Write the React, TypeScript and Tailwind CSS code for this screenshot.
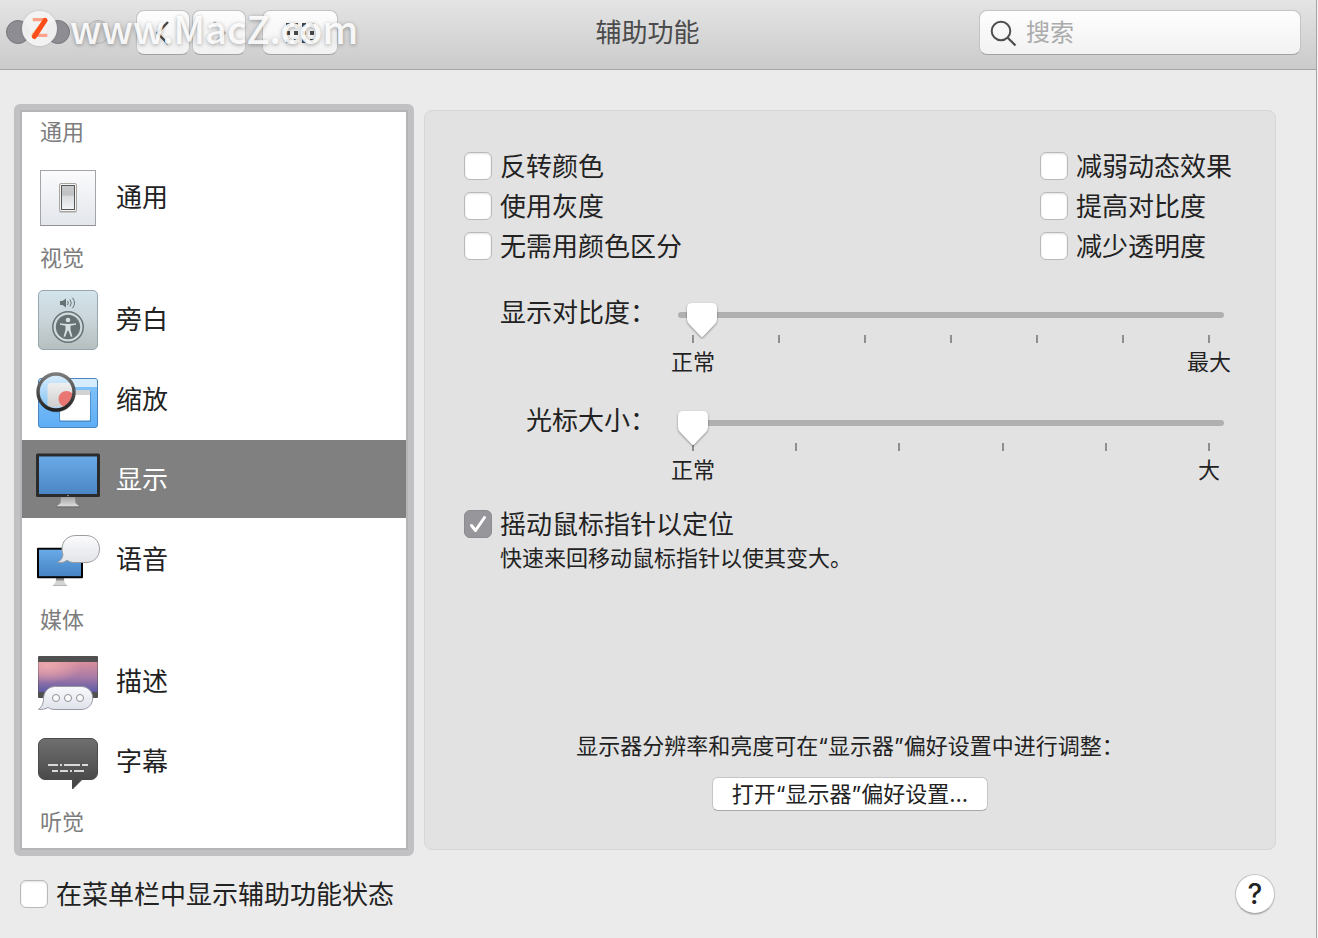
import React from "react";

function GeneralIcon() {
  return (
    <svg viewBox="0 0 64 64" className="size-16 shrink-0" aria-hidden="true">
      <defs>
        <linearGradient id="plate" x1="0" y1="0" x2="0" y2="1">
          <stop offset="0" stopColor="#fbfbfd" />
          <stop offset="1" stopColor="#e3e6eb" />
        </linearGradient>
        <linearGradient id="rocker" x1="0" y1="0" x2="0" y2="1">
          <stop offset="0" stopColor="#c9caca" />
          <stop offset="0.4" stopColor="#bfc1c3" />
          <stop offset="0.45" stopColor="#d9dbdd" />
          <stop offset="1" stopColor="#f2f4f5" />
        </linearGradient>
      </defs>
      <rect x="4.5" y="5.5" width="55" height="55" fill="url(#plate)" stroke="#a3a5a9" />
      <path d="M4 60.5h56" stroke="#8f9195" />
      <rect x="23" y="19" width="18" height="29" rx="2" fill="#000" opacity="0.15" />
      <rect x="23.5" y="18.5" width="17" height="28" rx="1.5" fill="#f5f4f2" stroke="#a8a49e" />
      <rect x="25.5" y="20.5" width="13" height="24" fill="url(#rocker)" stroke="#55585b" />
    </svg>
  );
}

function VoiceOverIcon() {
  return (
    <svg viewBox="0 0 64 64" className="size-16 shrink-0" aria-hidden="true">
      <defs>
        <linearGradient id="voBg" x1="0" y1="0" x2="0" y2="1">
          <stop offset="0" stopColor="#d3e4ec" />
          <stop offset="0.5" stopColor="#c9d5d9" />
          <stop offset="1" stopColor="#b6bebf" />
        </linearGradient>
      </defs>
      <rect x="2.5" y="3.5" width="59" height="59" rx="4.5" fill="url(#voBg)" stroke="#98a7ad" />
      <path d="M24 14h2.500l3.500-2.500v9l-3.500-2.500h-2.500z" fill="#667174" />
      <path
        d="M31.500 14q1.500 2 0 4M34 12.500q2.500 3.500 0 7M36.500 10.800q4 5.200 0 10.400"
        fill="none"
        stroke="#667174"
      />
      <circle cx="32" cy="40" r="15.200" fill="#cfdadd" stroke="#667174" strokeWidth="1.500" />
      <circle cx="32" cy="40" r="12.200" fill="#667174" />
      <circle cx="32" cy="33" r="2.300" fill="#d5dfe1" />
      <path
        d="M24 36.200q8 1.600 16 0v1.500l-5.500 1v4l2 7h-1.700l-2.300-6h-1l-2.300 6h-1.700l2-7v-4l-5.500-1z"
        fill="#d5dfe1"
      />
    </svg>
  );
}

function ZoomIcon() {
  return (
    <svg viewBox="0 0 64 64" className="size-16 shrink-0" aria-hidden="true">
      <defs>
        <linearGradient id="zoomWin" x1="0" y1="0" x2="0" y2="1">
          <stop offset="0" stopColor="#86c4f8" />
          <stop offset="1" stopColor="#5eaef6" />
        </linearGradient>
        <linearGradient id="zoomLens" x1="0" y1="0" x2="0" y2="1">
          <stop offset="0" stopColor="#d9edfc" />
          <stop offset="1" stopColor="#7fc0f4" />
        </linearGradient>
        <linearGradient id="zoomRim" x1="0" y1="0" x2="0" y2="1">
          <stop offset="0" stopColor="#7b7b7b" />
          <stop offset="1" stopColor="#222" />
        </linearGradient>
        <linearGradient id="zoomGrey" x1="0" y1="0" x2="0" y2="1">
          <stop offset="0" stopColor="#efefef" />
          <stop offset="1" stopColor="#cfcfcf" />
        </linearGradient>
        <clipPath id="zoomClip">
          <circle cx="20" cy="25" r="17" />
        </clipPath>
      </defs>
      <rect x="2.500" y="11.500" width="59" height="49" rx="2.500" fill="url(#zoomWin)" stroke="#4a86bd" />
      <path d="M3 20v-6a2 2 0 0 1 2-2h54a2 2 0 0 1 2 2v6z" fill="#d6ecfd" />
      <rect x="23" y="24" width="32" height="31" rx="1.500" fill="#2e6ca4" opacity="0.500" />
      <rect x="24" y="23" width="30" height="30.500" rx="1" fill="#fff" />
      <path d="M24 23h30v5h-30z" fill="#d3d3d5" />
      <circle cx="20.500" cy="26.500" r="19" fill="#000" opacity="0.200" />
      <circle cx="20" cy="25" r="17" fill="url(#zoomLens)" />
      <g clipPath="url(#zoomClip)">
        <rect x="11.500" y="16" width="32" height="24" rx="4" fill="url(#zoomGrey)" />
        <circle cx="30.500" cy="32" r="8" fill="#e87673" />
        <path d="M11.500 40h26v6h-26z" fill="#a9d3f6" />
      </g>
      <circle cx="20" cy="25" r="18" fill="none" stroke="url(#zoomRim)" strokeWidth="3.400" />
    </svg>
  );
}

function DisplayIcon() {
  return (
    <svg viewBox="0 0 64 64" className="size-16 shrink-0" aria-hidden="true">
      <defs>
        <linearGradient id="screen" x1="0" y1="0" x2="0" y2="1">
          <stop offset="0" stopColor="#6aaae8" />
          <stop offset="1" stopColor="#4a86c3" />
        </linearGradient>
        <linearGradient id="stand" x1="0" y1="0" x2="0" y2="1">
          <stop offset="0" stopColor="#a2a2a2" />
          <stop offset="1" stopColor="#dedede" />
        </linearGradient>
      </defs>
      <path d="M25 50h14l0.500 6 4 3.500h-23l4-3.500z" fill="url(#stand)" />
      <path d="M20 59.500h24v1h-24z" fill="#6a6a6a" />
      <rect x="0" y="6.500" width="64" height="43.500" rx="1.500" fill="#2b2b2b" />
      <rect x="3" y="9.500" width="58" height="37.500" fill="url(#screen)" />
      <circle cx="32" cy="48.500" r="0.800" fill="#aaa" />
    </svg>
  );
}

function SpeechIcon() {
  return (
    <svg viewBox="0 0 64 64" className="size-16 shrink-0" aria-hidden="true">
      <defs>
        <linearGradient id="speechScreen" x1="0" y1="0" x2="0" y2="1">
          <stop offset="0" stopColor="#6aaae8" />
          <stop offset="1" stopColor="#4583c4" />
        </linearGradient>
        <linearGradient id="speechBubble" x1="0" y1="0" x2="0" y2="1">
          <stop offset="0" stopColor="#fbfbfc" />
          <stop offset="1" stopColor="#e2e4e9" />
        </linearGradient>
      </defs>
      <path d="M20 51h8l.5 4.500 2.500 2.500h-14l2.500-2.500z" fill="#d4d4d4" />
      <path d="M20 51h8v2.500h-8z" fill="#8b8b8b" />
      <path d="M17 58h14v1h-14z" fill="#b5b5b5" />
      <rect x="1" y="20.700" width="46" height="30.500" rx="1" fill="#050505" />
      <rect x="3" y="22.700" width="42" height="26.500" fill="url(#speechScreen)" />
      <path
        d="M21.500 35.300c3-1.300 5-4 5.500-7.500c-.8-2-1-4-1-6c0-8 6-13.300 14-13.300h10c8 0 13.500 5.500 13.500 13.500s-5.500 13.500-13.500 13.500h-12c-3 0-5-1-7-2.300c-2.500 2-6 3-9.500 2.100z"
        fill="url(#speechBubble)"
        stroke="#9b9da1"
      />
    </svg>
  );
}

function DescriptionIcon() {
  return (
    <svg viewBox="0 0 64 64" className="size-16 shrink-0" aria-hidden="true">
      <defs>
        <linearGradient id="dusk" x1="0" y1="0" x2="0" y2="1">
          <stop offset="0" stopColor="#d98f9d" />
          <stop offset="0.500" stopColor="#a87aa6" />
          <stop offset="1" stopColor="#5c5ba6" />
        </linearGradient>
        <radialGradient id="duskGlow" cx="0.150" cy="0.100" r="0.600">
          <stop offset="0" stopColor="#eda9ae" />
          <stop offset="1" stopColor="#eda9ae" stopOpacity="0" />
        </radialGradient>
        <linearGradient id="descBubble" x1="0" y1="0" x2="0" y2="1">
          <stop offset="0" stopColor="#f8f9fb" />
          <stop offset="1" stopColor="#dfe3ea" />
        </linearGradient>
      </defs>
      <rect x="2" y="7" width="60" height="42" rx="1" fill="#505050" />
      <rect x="2.500" y="13" width="59" height="30" fill="url(#dusk)" />
      <rect x="2.500" y="13" width="59" height="30" fill="url(#duskGlow)" />
      <path
        d="M2.500 60.300c3-2 4.500-5 5-9.300c-.3-8 4.500-13.500 12-13.500h25.500c7 0 11.700 5 11.700 11.500s-4.700 11.500-11.700 11.500h-26c-3 0-5-.7-7-2c-2.500 1.500-6 2.300-9.500 1.800z"
        fill="url(#descBubble)"
        stroke="#9799a3"
      />
      <g fill="#fff" stroke="#8c8e96">
        <circle cx="20" cy="49" r="3.500" />
        <circle cx="32" cy="49" r="3.500" />
        <circle cx="44" cy="49" r="3.500" />
      </g>
    </svg>
  );
}

function CaptionsIcon() {
  return (
    <svg viewBox="0 0 64 64" className="size-16 shrink-0" aria-hidden="true">
      <defs>
        <linearGradient id="capBg" x1="0" y1="9" x2="0" y2="61" gradientUnits="userSpaceOnUse">
          <stop offset="0" stopColor="#707070" />
          <stop offset="0.800" stopColor="#4a4a4a" />
          <stop offset="1" stopColor="#3f3f3f" />
        </linearGradient>
      </defs>
      <path
        d="M9 9.500h46a6.500 6.500 0 0 1 6.500 6.500v28a6.500 6.500 0 0 1-6.500 6.500h-9l-9.500 9.500v-9.500h-27.500a6.500 6.500 0 0 1-6.500-6.500v-28a6.500 6.500 0 0 1 6.500-6.500z"
        fill="url(#capBg)"
        stroke="#4b4b4b"
      />
      <path
        d="M12 36h10M24 36h2M28 36h16M46 36h6M16 42h6M24 42h8M34 42h2M38 42h10"
        stroke="#d9d9d9"
        strokeWidth="2"
      />
    </svg>
  );
}

function Check({ label, defaultChecked = false }: { label: string; defaultChecked?: boolean }) {
  return (
    <label className="flex h-10 items-center gap-2 text-[26px]">
      <span className="grid shrink-0 place-items-center">
        <input
          type="checkbox"
          defaultChecked={defaultChecked}
          className="peer col-start-1 row-start-1 size-7 appearance-none rounded-md border border-[#b9b9b9] bg-white shadow-[inset_0_1px_2px_#0000001f] checked:border-[#8c8b90] checked:bg-[#97969b] checked:shadow-none"
        />
        <svg
          viewBox="0 0 28 28"
          className="pointer-events-none col-start-1 row-start-1 size-7 opacity-0 peer-checked:opacity-100"
          fill="none"
          stroke="#fff"
          strokeWidth="3"
          strokeLinecap="round"
          strokeLinejoin="round"
          aria-hidden="true"
        >
          <path d="M7.500 15.500l4 5L20.500 7.500" />
        </svg>
      </span>
      <span className="whitespace-nowrap">{label}</span>
    </label>
  );
}

function Slider({
  id,
  label,
  value,
  ticks,
  low,
  high,
}: {
  id: string;
  label: string;
  value: number;
  ticks: number;
  low: string;
  high: string;
}) {
  return (
    <div className="grid grid-cols-[156px_1fr] gap-x-[14px] pl-9">
      <label htmlFor={id} className="h-10 text-right text-[26px] leading-10 whitespace-nowrap">
        {label}
      </label>
      <div className="pt-1">
        <div className="px-[7px]">
          <div className="grid items-center">
            <span className="col-start-1 row-start-1 mx-px h-[6px] rounded-full bg-[#b0b0b0]" />
            <input
              id={id}
              type="range"
              min={0}
              max={100}
              step="any"
              defaultValue={value}
              className="relative z-10 col-start-1 row-start-1 block h-9 w-full appearance-none bg-transparent drop-shadow-[0_1px_1px_#00000066] [&::-webkit-slider-runnable-track]:h-[6px] [&::-webkit-slider-thumb]:-mt-[10px] [&::-webkit-slider-thumb]:h-9 [&::-webkit-slider-thumb]:w-8 [&::-webkit-slider-thumb]:appearance-none [&::-webkit-slider-thumb]:bg-white [&::-webkit-slider-thumb]:[clip-path:path('M6_1H26Q31_1_31_6V17Q31_20_29_22L17_34.500Q16_35.500_15_34.500L3_22Q1_20_1_17V6Q1_1_6_1Z')]"
            />
          </div>
          <div className="mt-[2px] flex justify-between px-[15px]">
            {Array.from({ length: ticks }, (_, i) => (
              <span key={i} className="h-2 w-[2px] bg-[#8f8f8f]" />
            ))}
          </div>
        </div>
        <div className="mt-1 flex justify-between text-[22px] leading-[30px]">
          <span className="w-[46px] text-center">{low}</span>
          <span className="w-[46px] text-center">{high}</span>
        </div>
      </div>
    </div>
  );
}

function Section({ children, first = false }: { children: string; first?: boolean }) {
  return (
    <h2
      className={
        first
          ? "h-11 pl-[18px] text-[22px] leading-10 text-[#7d7d7d]"
          : "h-10 pl-[18px] text-[22px] leading-10 text-[#7d7d7d]"
      }
    >
      {children}
    </h2>
  );
}

function Item({
  icon,
  label,
  selected = false,
}: {
  icon: React.ReactNode;
  label: string;
  selected?: boolean;
}) {
  return (
    <button
      type="button"
      aria-current={selected ? "page" : undefined}
      className={
        selected
          ? "flex h-[78px] items-center gap-4 bg-[#808080] pl-[14px] text-[26px] text-white"
          : "flex h-[78px] items-center gap-4 pl-[14px] text-[26px]"
      }
    >
      {icon}
      <span>{label}</span>
    </button>
  );
}

const toolButton =
  "grid h-[45px] place-items-center rounded-lg border border-[#c4c4c4] border-b-[#a2a2a2] bg-linear-to-b from-[#fdfdfd] to-[#f1f1f1]";

function Toolbar() {
  return (
    <header className="relative flex h-[70px] items-start border-b border-[#a6a6a6] bg-linear-to-b from-[#e4e4e4] to-[#cbcbcb] pt-[10px] pr-[15px] pl-[6px]">
      <div className="flex h-11 w-[130px] items-center gap-4">
        <button type="button" aria-label="关闭" className="size-6 rounded-full border border-[#77767b] bg-[#8e8d93]" />
        <button type="button" aria-label="最小化" className="size-6 rounded-full border border-[#77767b] bg-[#8e8d93]" />
        <button type="button" aria-label="缩放" className="size-6 rounded-full border border-[#b4b4b4] bg-[#d0d0d0]" />
      </div>
      <div className="flex gap-[2px]">
        <button type="button" aria-label="后退" className={toolButton + " w-[54px]"}>
          <svg viewBox="0 0 24 24" className="size-6" fill="none" stroke="#4a4a4a" strokeWidth="2.500" aria-hidden="true">
            <path d="M17 1L6.500 12L17 23" />
          </svg>
        </button>
        <button type="button" aria-label="前进" className={toolButton + " w-[54px]"}>
          <svg viewBox="0 0 24 24" className="size-6" fill="none" stroke="#b5b5b5" strokeWidth="2.500" aria-hidden="true">
            <path d="M7 1L17.500 12L7 23" />
          </svg>
        </button>
      </div>
      <button type="button" aria-label="显示全部" className={toolButton + " ml-4 w-[76px]"}>
        <svg viewBox="0 0 28 20" className="h-5 w-7" aria-hidden="true">
          <path
            d="M0 2h28M0 10h28M0 18h28"
            stroke="#484848"
            strokeWidth="4"
            strokeDasharray="4 4"
          />
        </svg>
      </button>
      <h1 className="flex-1 pr-[22px] text-center text-[26px] leading-[46px] text-[#4b4b4b]">辅助功能</h1>
      <label className="flex h-[45px] w-[322px] items-center gap-2 rounded-lg border border-[#c4c4c4] border-b-[#a2a2a2] bg-linear-to-b from-[#fefefe] to-[#f2f2f2] pl-[10px]">
        <svg viewBox="0 0 28 28" className="size-7 shrink-0" fill="none" stroke="#4f4f4f" strokeWidth="2" aria-hidden="true">
          <circle cx="11" cy="12" r="9.300" />
          <path d="M17.700 18.700L25.500 26.500" strokeWidth="2.300" />
        </svg>
        <input
          type="search"
          aria-label="搜索"
          placeholder="搜索"
          className="w-full min-w-0 bg-transparent text-2xl outline-none placeholder:text-[#ababab]"
        />
      </label>
      <div className="pointer-events-none absolute top-0 left-[22px] flex h-14 items-center gap-[13px]">
        <span className="grid size-[35px] place-items-center rounded-full bg-[#f3f3f3]/95 shadow-[0_0_3px_#00000026]">
          <span className="col-start-1 row-start-1 font-['Liberation_Sans'] text-[28px] leading-none font-bold text-[#fba288]">
            Z
          </span>
          <svg viewBox="0 0 35 35" className="col-start-1 row-start-1 size-[35px]" aria-hidden="true">
            <path d="M23 9.500L12.500 25.500" stroke="#fb4d17" strokeWidth="5" strokeLinecap="round" />
          </svg>
        </span>
        <span className="font-['Noto_Sans_CJK_SC'] text-[38px] leading-[52px] font-medium text-white/90 [text-shadow:0_1px_4px_#00000059]">
          www.MacZ.com
        </span>
      </div>
    </header>
  );
}

export default function App() {
  return (
    <div className="min-h-screen bg-[#f4f4f4] pr-px font-[Inter,'Noto_Sans_CJK_SC',sans-serif] text-[#222]">
      <div className="flex min-h-screen flex-col border-r border-[#a5a5a5] bg-[#ebebeb]">
        <Toolbar />
        <main className="px-[14px] pt-[34px] pr-10 pb-[22px]">
          <div className="flex gap-[10px]">
            <nav
              aria-label="辅助功能"
              className="flex w-[400px] shrink-0 rounded-md border-6 border-[#c1c1c3] bg-[#c1c1c3]"
            >
              <div className="flex flex-1 flex-col gap-[2px] border-2 border-[#b5b5b7] bg-white pb-[6px]">
                <Section first>通用</Section>
                <Item icon={<GeneralIcon />} label="通用" />
                <Section>视觉</Section>
                <Item icon={<VoiceOverIcon />} label="旁白" />
                <Item icon={<ZoomIcon />} label="缩放" />
                <Item icon={<DisplayIcon />} label="显示" selected />
                <Item icon={<SpeechIcon />} label="语音" />
                <Section>媒体</Section>
                <Item icon={<DescriptionIcon />} label="描述" />
                <Item icon={<CaptionsIcon />} label="字幕" />
                <Section>听觉</Section>
              </div>
            </nav>
            <section className="my-[6px] flex min-w-0 flex-1 flex-col rounded-lg border border-[#d6d6d6] bg-[#e2e2e2] px-[39px] pt-[35px] pb-[38px]">
              <div className="flex justify-between pr-1">
                <div>
                  <Check label="反转颜色" />
                  <Check label="使用灰度" />
                  <Check label="无需用颜色区分" />
                </div>
                <div>
                  <Check label="减弱动态效果" />
                  <Check label="提高对比度" />
                  <Check label="减少透明度" />
                </div>
              </div>
              <div className="mt-[27px] flex flex-col gap-6 pr-1">
                <Slider id="contrast" label="显示对比度：" value={1.75} ticks={7} low="正常" high="最大" />
                <Slider id="cursor" label="光标大小：" value={0} ticks={6} low="正常" high="大" />
              </div>
              <div className="mt-[19px]">
                <Check label="摇动鼠标指针以定位" defaultChecked />
                <p className="pl-9 text-[22px] leading-7">快速来回移动鼠标指针以使其变大。</p>
              </div>
              <div className="mt-auto flex flex-col items-center gap-4 text-[22px]">
                <p className="leading-[30px]">显示器分辨率和亮度可在“显示器”偏好设置中进行调整：</p>
                <button
                  type="button"
                  className="h-[34px] rounded-md border border-[#c6c6c6] border-b-[#a9a9a9] bg-white px-[19px] leading-8"
                >
                  打开“显示器”偏好设置...
                </button>
              </div>
            </section>
          </div>
          <div className="mt-[18px] flex items-center justify-between pr-[1px] pl-[6px]">
            <Check label="在菜单栏中显示辅助功能状态" />
            <button
              type="button"
              aria-label="帮助"
              className="size-10 rounded-full border border-[#c4c4c4] border-b-[#a9a9a9] bg-white text-[28px] leading-9 font-medium shadow-[0_1px_1px_#00000026]"
            >
              ?
            </button>
          </div>
        </main>
      </div>
    </div>
  );
}
